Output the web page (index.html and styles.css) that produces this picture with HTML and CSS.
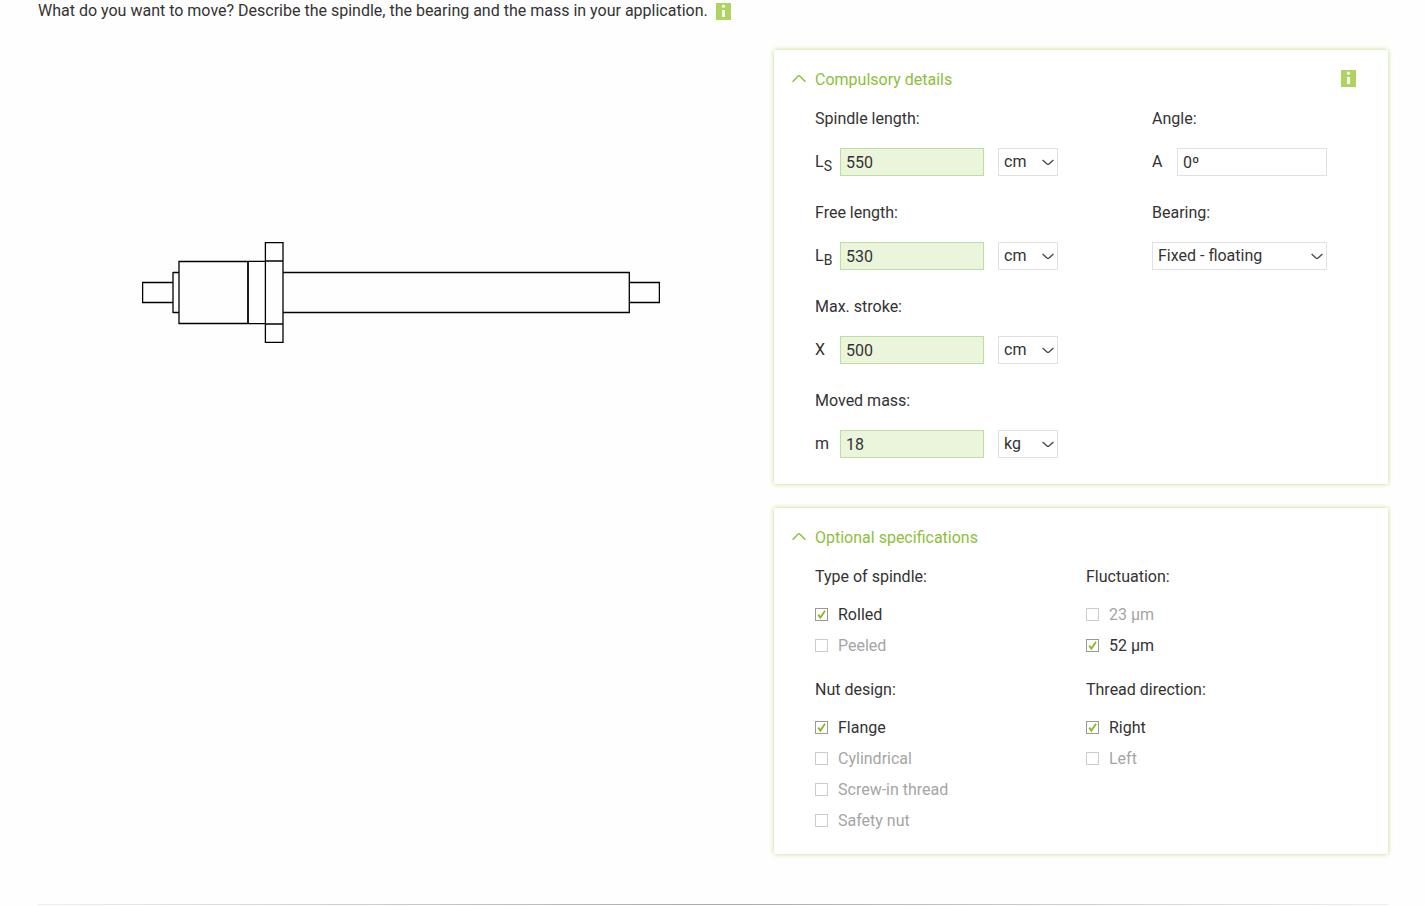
FILE: index.html
```html
<!DOCTYPE html>
<html lang="en">
<head>
<meta charset="utf-8">
<title>Spindle configuration</title>
<link rel="stylesheet" href="styles.css">
</head>
<body>
<svg class="sprite" aria-hidden="true">
  <symbol id="info" viewBox="0 0 15 17"><rect width="15" height="17" fill="#afd35f"/><circle cx="7.5" cy="3.2" r="1.6" fill="#fff"/><path d="M6 7h3v7H6z" fill="#fff"/></symbol>
  <symbol id="down" viewBox="0 0 12 7"><path d="M.6 1l4.4 4q1 .8 2 0l4.4-4" fill="none" stroke="#444" stroke-width="1.3"/></symbol>
  <symbol id="up" viewBox="0 0 14 9"><path d="M.6 7.800l5.400-5.600q1-1 2 0l5.400 5.600" fill="none" stroke="#8dbf2e" stroke-width="1.4"/></symbol>
  <symbol id="tick" viewBox="0 0 13 13"><path d="M3.200 6.600l2.200 3L10 2.800" fill="none" stroke="#8ab81c" stroke-width="1.8"/></symbol>
</svg>
<div class="page">
  <header class="intro">
    <p>What do you want to move? Describe the spindle, the bearing and the mass in your application.</p>
    <button class="info" type="button" aria-label="Information"><svg><use href="#info"/></svg></button>
  </header>
  <main class="main">
    <div class="figure">
      <svg class="drawing" viewBox="0 0 518 101" role="img" aria-label="Spindle with flange nut">
        <g fill="none" stroke="#000" stroke-width="1.3">
          <path d="M31 40.500H.6v20H31M31 30.500h6M31 70.500h6M31 30v41M37 19.500h69v62H37zM106 19.400h17M106 81.700h17M123.400.600h17.600v99.700h-17.600zM123 19H141M123 82H141M141 30.500h346.300v40H141M487.300 40.500h30.100v20h-30.100"/>
          <path d="M106 19v63"/>
        </g>
      </svg>
    </div>
    <form class="panels">
      <section class="panel">
        <div class="panel-head">
          <h2><button class="toggle" type="button" aria-expanded="true"><svg><use href="#up"/></svg><span>Compulsory details</span></button></h2>
          <button class="info" type="button" aria-label="Information"><svg><use href="#info"/></svg></button>
        </div>
        <div class="fields">
          <div class="column">
            <div class="field">
              <label for="ls">Spindle length:</label>
              <div class="row"><span class="sym">L<sub>S</sub></span><input class="box required" id="ls" type="text" value="550"><span class="pick unit"><select class="box" aria-label="Spindle length unit"><option>cm</option></select><svg><use href="#down"/></svg></span></div>
            </div>
            <div class="field">
              <label for="lb">Free length:</label>
              <div class="row"><span class="sym">L<sub>B</sub></span><input class="box required" id="lb" type="text" value="530"><span class="pick unit"><select class="box" aria-label="Free length unit"><option>cm</option></select><svg><use href="#down"/></svg></span></div>
            </div>
            <div class="field">
              <label for="x">Max. stroke:</label>
              <div class="row"><span class="sym">X</span><input class="box required" id="x" type="text" value="500"><span class="pick unit"><select class="box" aria-label="Stroke unit"><option>cm</option></select><svg><use href="#down"/></svg></span></div>
            </div>
            <div class="field">
              <label for="m">Moved mass:</label>
              <div class="row"><span class="sym">m</span><input class="box required" id="m" type="text" value="18"><span class="pick unit"><select class="box" aria-label="Mass unit"><option>kg</option></select><svg><use href="#down"/></svg></span></div>
            </div>
          </div>
          <div class="column">
            <div class="field">
              <label for="a">Angle:</label>
              <div class="row"><span class="sym">A</span><input class="box wide" id="a" type="text" value="0º"></div>
            </div>
            <div class="field">
              <label for="bearing">Bearing:</label>
              <div class="row"><span class="pick wide"><select class="box" id="bearing"><option>Fixed - floating</option></select><svg><use href="#down"/></svg></span></div>
            </div>
          </div>
        </div>
      </section>
      <section class="panel optional">
        <div class="panel-head">
          <h2><button class="toggle" type="button" aria-expanded="true"><svg><use href="#up"/></svg><span>Optional specifications</span></button></h2>
        </div>
        <div class="options">
          <fieldset>
            <legend>Type of spindle:</legend>
            <label class="check"><span class="tick"><input type="checkbox" checked><svg><use href="#tick"/></svg></span>Rolled</label>
            <label class="check"><span class="tick"><input type="checkbox" disabled></span>Peeled</label>
          </fieldset>
          <fieldset>
            <legend>Fluctuation:</legend>
            <label class="check"><span class="tick"><input type="checkbox" disabled></span>23 µm</label>
            <label class="check"><span class="tick"><input type="checkbox" checked><svg><use href="#tick"/></svg></span>52 µm</label>
          </fieldset>
          <fieldset>
            <legend>Nut design:</legend>
            <label class="check"><span class="tick"><input type="checkbox" checked><svg><use href="#tick"/></svg></span>Flange</label>
            <label class="check"><span class="tick"><input type="checkbox" disabled></span>Cylindrical</label>
            <label class="check"><span class="tick"><input type="checkbox" disabled></span>Screw-in thread</label>
            <label class="check"><span class="tick"><input type="checkbox" disabled></span>Safety nut</label>
          </fieldset>
          <fieldset>
            <legend>Thread direction:</legend>
            <label class="check"><span class="tick"><input type="checkbox" checked><svg><use href="#tick"/></svg></span>Right</label>
            <label class="check"><span class="tick"><input type="checkbox" disabled></span>Left</label>
          </fieldset>
        </div>
      </section>
    </form>
  </main>
  <hr class="rule">
</div>
</body>
</html>
```
FILE: styles.css
```css
* { box-sizing: border-box; }
body { margin: 0; background: #fefefe; color: #333; font: 16px/24px Roboto, "Liberation Sans", sans-serif; }
p, h2 { margin: 0; font-size: 16px; font-weight: 400; }
button { padding: 0; border: 0; background: none; color: inherit; font: inherit; cursor: pointer; }
input, select { margin: 0; color: inherit; font: inherit; }
svg { display: block; }
.sprite { display: none; }
.page { padding: 0 37px 0 38px; }

.intro { display: flex; align-items: center; gap: 8px; line-height: 22px; }
.info { flex: none; width: 15px; height: 17px; }
.info svg { width: 15px; height: 17px; }

.main { display: grid; grid-template-columns: minmax(0, 726fr) minmax(0, 614fr); gap: 10px; padding-top: 28px; }
.figure { padding-top: 192px; }
.drawing { width: 518px; max-width: 100%; margin: 0 auto; }
.panels { display: grid; align-content: start; gap: 24px; }

.panel { padding: 15px 32px 26px 18px; border-radius: 2px; background: #fff; box-shadow: 0 0 5px #bddc7c; }
.panel-head { display: flex; align-items: center; justify-content: space-between; margin-bottom: 16px; }
.toggle { display: flex; align-items: center; gap: 9px; color: #8dbf3a; line-height: 22px; }
.toggle span { padding-top: 4px; }
.toggle svg { width: 14px; height: 9px; }

.fields { display: flex; justify-content: space-between; gap: 20px; padding: 0 29px 0 23px; }
.column { display: flex; flex-direction: column; gap: 25px; }
.column:last-child { width: 175px; }
.field { display: grid; gap: 17px; }
.row { display: flex; height: 28px; line-height: 28px; }
.sym { flex: none; width: 25px; }
.sym sub { font-size: 14px; line-height: 0; }
.box { width: 100%; height: 28px; padding: 0 5px; border: 1px solid #e1e1e1; border-radius: 0; background: #fff; appearance: none; line-height: 24px; }
.required { width: 144px; margin-right: 14px; border-color: #bfdf9f; background: #ebf5dc; }
.wide { flex: 1; min-width: 0; }
.pick { display: grid; align-items: center; }
.pick > * { grid-area: 1 / 1; }
.pick svg { justify-self: end; width: 12px; height: 7px; margin-right: 4px; pointer-events: none; }
.unit { width: 60px; }

.optional { padding-bottom: 18px; }
.options { display: grid; grid-template-columns: 271fr 270fr; gap: 17px 0; padding-left: 23px; }
fieldset { min-width: 0; margin: 0; padding: 0; border: 0; }
legend { padding: 0; margin-bottom: 10px; }
.check { display: flex; align-items: center; gap: 10px; height: 31px; }
.check:has(:disabled) { color: #a5a5a5; }
.tick { display: grid; }
.tick > * { grid-area: 1 / 1; width: 13px; height: 13px; }
.tick input { appearance: none; border: 1px solid #999; background: #fff; }
.tick input:disabled { border-color: #ccc; }
.tick svg { pointer-events: none; }

.rule { height: 1px; margin: 50px 0 0; border: 0; background: linear-gradient(90deg, #eee, #aaa 50%, #eee); }
```
